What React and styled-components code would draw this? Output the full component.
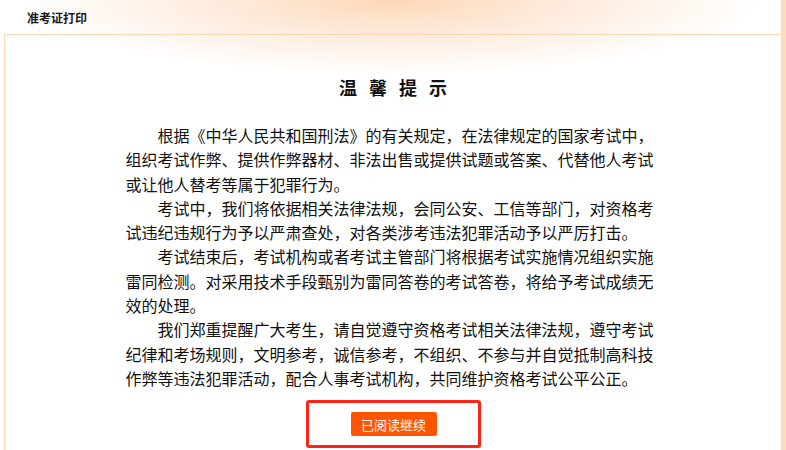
import React from "react";
import styled, { createGlobalStyle } from "styled-components";

const Global = createGlobalStyle`
  html, body { margin: 0; padding: 0; background: #fff; }
  body {
    font-family: "Noto Sans CJK SC", "Noto Sans", sans-serif;
    color: #111;
  }
`;

const Page = styled.div`
  width: 786px;
  height: 450px;
  overflow: hidden;
  display: flex;
  background: radial-gradient(ellipse 370px 74px at 50% 0, #fdd8b8 0%, #feeadb 45%, #ffffff 100%);
`;

const Main = styled.div`
  flex: 1;
  display: flex;
  flex-direction: column;
  min-width: 0;
`;

const SideStrip = styled.div`
  width: 5px;
  background: #fddcbd;
`;

const Header = styled.div`
  height: 34px;
  display: flex;
  align-items: center;
  padding-left: 27px;
  font-size: 12px;
  font-weight: 700;
  color: #1a1a1a;
`;

const Panel = styled.div`
  flex: 1;
  margin-left: 4px;
  border-top: 1px solid #fbd6b3;
  border-left: 1px solid #fbd6b3;
  padding: 40px 7px 0 0;
  display: flex;
  flex-direction: column;
  align-items: center;
`;

const Title = styled.h2`
  margin: 0 0 24px;
  font-size: 18px;
  line-height: 24px;
  font-weight: 700;
  letter-spacing: 12px;
  padding-left: 19px;
  color: #111;
`;

const Body = styled.div`
  width: 528px;
  font-size: 16px;
  line-height: 24.3px;
  color: #111;
`;

const Line = styled.span`
  display: block;
  white-space: nowrap;
  text-indent: ${(p) => (p.$first ? "2em" : "0")};
  text-align: ${(p) => (p.$last ? "left" : "justify")};
  text-align-last: ${(p) => (p.$last ? "left" : "justify")};
`;

const Frame = styled.div`
  margin: 10px 0 0 8px;
  width: 169px;
  height: 42px;
  border: 3px solid #ff2418;
  border-radius: 3px;
  display: flex;
  align-items: center;
  justify-content: center;
`;

const ReadButton = styled.button`
  width: 86px;
  height: 24px;
  border: none;
  border-radius: 2px;
  background: #ff5500;
  color: #fff;
  font-family: "Noto Sans CJK SC", sans-serif;
  font-size: 13px;
  padding: 0;
  cursor: pointer;
`;

const paragraphs = [
  [
    "根据《中华人民共和国刑法》的有关规定，在法律规定的国家考试中，",
    "组织考试作弊、提供作弊器材、非法出售或提供试题或答案、代替他人考试",
    "或让他人替考等属于犯罪行为。",
  ],
  [
    "考试中，我们将依据相关法律法规，会同公安、工信等部门，对资格考",
    "试违纪违规行为予以严肃查处，对各类涉考违法犯罪活动予以严厉打击。",
  ],
  [
    "考试结束后，考试机构或者考试主管部门将根据考试实施情况组织实施",
    "雷同检测。对采用技术手段甄别为雷同答卷的考试答卷，将给予考试成绩无",
    "效的处理。",
  ],
  [
    "我们郑重提醒广大考生，请自觉遵守资格考试相关法律法规，遵守考试",
    "纪律和考场规则，文明参考，诚信参考，不组织、不参与并自觉抵制高科技",
    "作弊等违法犯罪活动，配合人事考试机构，共同维护资格考试公平公正。",
  ],
];

export default function App() {
  return (
    <>
      <Global />
      <Page>
        <Main>
          <Header>准考证打印</Header>
          <Panel>
            <Title>温馨提示</Title>
            <Body>
              {paragraphs.map((lines, pi) =>
                lines.map((t, li) => (
                  <Line
                    key={`${pi}-${li}`}
                    $first={li === 0}
                    $last={li === lines.length - 1}
                  >
                    {t}
                  </Line>
                ))
              )}
            </Body>
            <Frame>
              <ReadButton>已阅读继续</ReadButton>
            </Frame>
          </Panel>
        </Main>
        <SideStrip />
      </Page>
    </>
  );
}
